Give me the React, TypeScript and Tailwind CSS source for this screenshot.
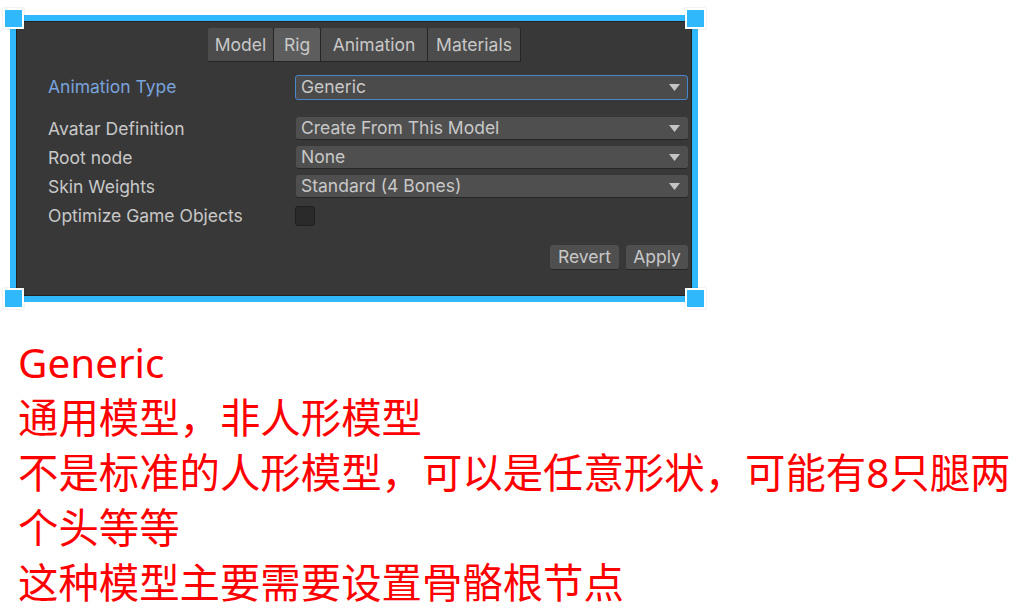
import React from "react";

const tabs = [
  { name: "Model", w: "w-[66px]" },
  { name: "Rig", w: "w-[47px]", active: true },
  { name: "Animation", w: "w-[107px]" },
  { name: "Materials", w: "w-[93px]" },
];

const rows = [
  { label: "Avatar Definition", value: "Create From This Model" },
  { label: "Root node", value: "None" },
  { label: "Skin Weights", value: "Standard (4 Bones)" },
];

function Arrow() {
  return (
    <svg width="11" height="7" viewBox="0 0 11 7" className="shrink-0">
      <path d="M0 0 L11 0 L5.5 7 Z" fill="#c4c4c4" />
    </svg>
  );
}

function Dropdown({ value, focused }: { value: string; focused?: boolean }) {
  return (
    <div
      className={
        focused
          ? "flex h-[25px] flex-1 items-center justify-between rounded-[3px] border border-[#4a84cc] bg-[#4b4b4b] pl-[5px] pr-[7px]"
          : "flex h-[23px] flex-1 items-center justify-between rounded-[3px] border-b border-[#262626] bg-[#4f4f4f] pl-[5px] pr-[8px]"
      }
    >
      <span>{value}</span>
      <Arrow />
    </div>
  );
}

function Handle({ pos }: { pos: string }) {
  return (
    <div
      className={`absolute h-[21px] w-[21px] border-2 border-white bg-[#2fb8fc] shadow-[0_0_1px_rgba(0,0,0,0.3)] ${pos}`}
    />
  );
}

export default function App() {
  return (
    <div className="h-[610px] w-[1018px] overflow-hidden bg-white">
      <div className="relative ml-[10px] mt-[15px] h-[287px] w-[688px] border-[6px] border-[#2fb8fc]">
        <div
          className="flex h-full flex-col border border-[#222222] bg-[#383838] text-[17.5px] text-[#c8c8c8]"
          style={{ fontFamily: "Inter, 'Noto Sans', sans-serif" }}
        >
          <div className="ml-[191px] mt-[6px] flex h-[34px]">
            {tabs.map((t) => (
              <div
                key={t.name}
                className={`flex items-center justify-center rounded-t-[2px] border-r border-b border-[#252525] pt-[1px] ${t.w} ${
                  t.active ? "bg-[#5d5d5d]" : "bg-[#4c4c4c]"
                }`}
              >
                {t.name}
              </div>
            ))}
          </div>

          <div className="mt-[12px] flex items-center pr-[3px]">
            <div className="w-[278px] pl-[31px] text-[#78a3dc]">Animation Type</div>
            <Dropdown value="Generic" focused />
          </div>

          <div className="mt-[17px] flex flex-col gap-[6px] pr-[3px]">
            {rows.map((r) => (
              <div key={r.label} className="flex h-[23px] items-center">
                <div className="w-[279px] pl-[31px]">{r.label}</div>
                <Dropdown value={r.value} />
              </div>
            ))}
            <div className="flex h-[23px] items-center">
              <div className="w-[278px] pl-[31px]">Optimize Game Objects</div>
              <div className="h-[20px] w-[20px] rounded-[3px] border border-[#1f1f1f] bg-[#2a2a2a]" />
            </div>
          </div>

          <div className="mt-[18px] flex justify-end gap-[7px] pr-[3px]">
            <div className="flex h-[25px] w-[69px] items-center justify-center rounded-[3px] border-b border-[#262626] bg-[#4f4f4f]">
              Revert
            </div>
            <div className="flex h-[25px] w-[62px] items-center justify-center rounded-[3px] border-b border-[#262626] bg-[#4f4f4f]">
              Apply
            </div>
          </div>
        </div>
        <Handle pos="-left-[13px] -top-[13px]" />
        <Handle pos="-right-[14px] -top-[13px]" />
        <Handle pos="-left-[13px] -bottom-[13px]" />
        <Handle pos="-right-[14px] -bottom-[13px]" />
      </div>

      <div
        className="mt-[33px] pl-[18px] text-[40.4px] leading-[55px] text-[#ff0000]"
        style={{ fontFamily: "'Noto Sans', 'Noto Sans CJK SC', sans-serif" }}
      >
        <div>Generic</div>
        <div>通用模型，非人形模型</div>
        <div>不是标准的人形模型，可以是任意形状，可能有8只腿两个头等等</div>
        <div>这种模型主要需要设置骨骼根节点</div>
      </div>
    </div>
  );
}
